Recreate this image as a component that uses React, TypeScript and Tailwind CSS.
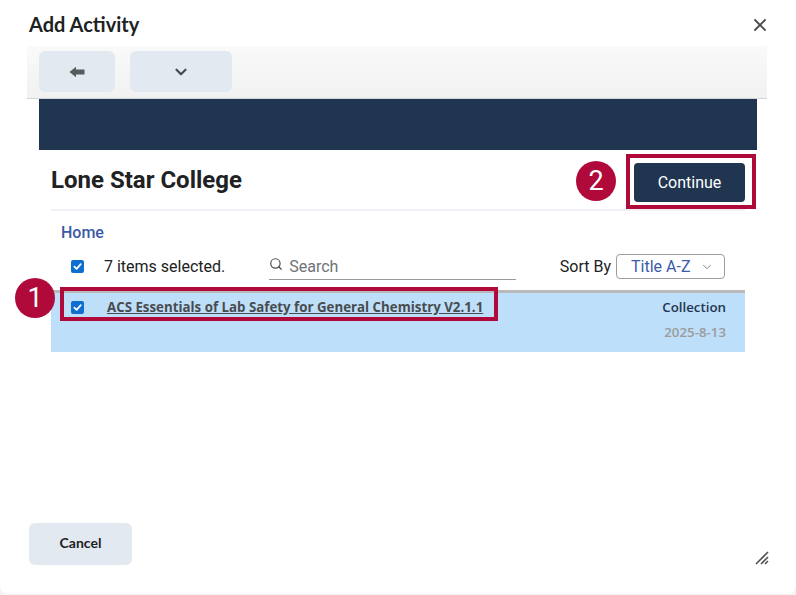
import { X, Search, ChevronDown } from 'lucide-react';

const lato = { fontFamily: 'Lato, "Liberation Sans", sans-serif' };
const openSans = { fontFamily: '"Open Sans", sans-serif' };

function CheckBox() {
  return (
    <span className="w-[13px] h-[13px] rounded-[2px] bg-[#0f6fd0] flex items-center justify-center shrink-0">
      <svg width="9" height="9" viewBox="0 0 10 10" fill="none">
        <path d="M1.5 5.2 L4 7.6 L8.6 2.4" stroke="white" strokeWidth="1.9" strokeLinecap="round" strokeLinejoin="round" />
      </svg>
    </span>
  );
}

function Marker({ n }: { n: string }) {
  return (
    <div className="w-[40px] h-[40px] rounded-full bg-[#b00a3b] text-white flex items-center justify-center text-[27px] leading-none font-[Roboto,sans-serif]">
      {n}
    </div>
  );
}

export default function App() {
  return (
    <div className="w-[796px] h-[595px] bg-[#f4f4f4] overflow-hidden">
      <div className="relative w-[796px] h-[594px] bg-white rounded-b-[8px] flex flex-col font-[Roboto,sans-serif] text-[#202122]">
        {/* Header */}
        <div className="h-[46px] px-[29px] pt-[10px] flex items-start justify-between">
          <h1 style={lato} className="text-[20px] font-bold leading-[28px] text-[#202122]">Add Activity</h1>
          <X size={20} strokeWidth={2.2} className="text-[#494c4e] mt-[5px] -mr-[3px]" />
        </div>

        {/* Toolbar */}
        <div className="ml-[27px] w-[740px] h-[53px] bg-gradient-to-b from-[#fafafa] to-[#f1f1f1] border-b border-[#d6d6d6] flex items-start gap-[15px] pl-[12px] pt-[5px]">
          <button className="w-[76px] h-[41px] rounded-[6px] bg-[#e3e9f1] flex items-center justify-center">
            <svg width="16" height="12" viewBox="0 0 16 12">
              <path d="M0.5 6 L7 0.8 L7 3.6 L15.5 3.6 L15.5 8.4 L7 8.4 L7 11.2 Z" fill="#565a5c" />
            </svg>
          </button>
          <button className="w-[102px] h-[41px] rounded-[6px] bg-[#e3e9f1] flex items-center justify-center">
            <ChevronDown size={18} strokeWidth={3} className="text-[#494c4e]" />
          </button>
        </div>

        {/* Content */}
        <div className="ml-[39px] w-[718px] flex flex-col">
          <div className="h-[51px] bg-[#1f3550]" />
          <div className="px-[12px]">
            <div className="h-[61px] border-b-2 border-[#eef2f6] flex items-start justify-between">
              <h2 className="text-[24px] leading-[28px] font-bold text-[#202122] pt-[16px]">Lone Star College</h2>
              <button className="w-[111px] h-[39px] mt-[13px] rounded-[4px] bg-[#1f3550] text-white text-[16px]">Continue</button>
            </div>

            <div className="pt-[12px] pl-[10px] text-[16px] font-medium text-[#3b5ba9] leading-[19px]">Home</div>

            <div className="h-[31px] mt-[9px] flex items-center pl-[20px] pr-[20px]">
              <CheckBox />
              <span className="ml-[20px] text-[16px] text-[#202122]">7 items selected.</span>
              <div className="ml-[44px] w-[247px] h-[26px] border-b border-[#9a9a9a] flex items-center gap-[6px] pt-[2px]">
                <Search size={14} strokeWidth={2} className="text-[#494c4e] -mt-[6px]" />
                <span className="text-[16px] text-[#6e7376]">Search</span>
              </div>
              <span className="ml-auto text-[16px] text-[#202122]">Sort By</span>
              <div className="ml-[5px] w-[109px] h-[25px] border border-[#9d9d9d] rounded-[4px] flex items-center justify-between pl-[14px] pr-[10px]">
                <span className="text-[16px] text-[#3b5ba9]">Title A-Z</span>
                <ChevronDown size={14} strokeWidth={1.5} className="text-[#6e7376]" />
              </div>
            </div>

            <div className="mt-[8px] h-[62px] bg-[#bddff9] border-t-[3px] border-[#b9b9b9] flex justify-between pl-[20px] pr-[19px] pt-[5px]">
              <div className="h-[18px] flex items-center gap-[23px]">
                <CheckBox />
                <span className="text-[13.3px] leading-[18px] font-bold underline text-[#494c4e]" style={openSans}>
                  ACS Essentials of Lab Safety for General Chemistry V2.1.1
                </span>
              </div>
              <div className="flex flex-col items-end text-[13.3px] leading-[18px] font-semibold" style={openSans}>
                <span className="text-[#1f3550]">Collection</span>
                <span className="mt-[7px] text-[#9b9b9b]">2025-8-13</span>
              </div>
            </div>
          </div>
        </div>

        {/* Footer */}
        <div className="mt-auto h-[71px] px-[29px] flex items-start justify-between">
          <button style={lato} className="w-[103px] h-[42px] rounded-[6px] bg-[#e3e9f1] text-[14px] font-bold text-[#202122] pb-[3px]">Cancel</button>
          <svg width="14" height="14" viewBox="0 0 14 14" className="mt-[28px] mr-[-2px]">
            <path d="M1 13 L13 1 M6 13 L13 6 M10 13 L13 10" stroke="#555" strokeWidth="1.6" />
          </svg>
        </div>

        {/* Annotations */}
        <div className="absolute left-[626px] top-[154px] w-[130px] h-[55px] border-[4px] border-[#b00a3b]" />
        <div className="absolute left-[576px] top-[161px]"><Marker n="2" /></div>
        <div className="absolute left-[60px] top-[287px] w-[438px] h-[34px] border-[4px] border-[#b00a3b]" />
        <div className="absolute left-[15px] top-[278px]"><Marker n="1" /></div>
      </div>
    </div>
  );
}
